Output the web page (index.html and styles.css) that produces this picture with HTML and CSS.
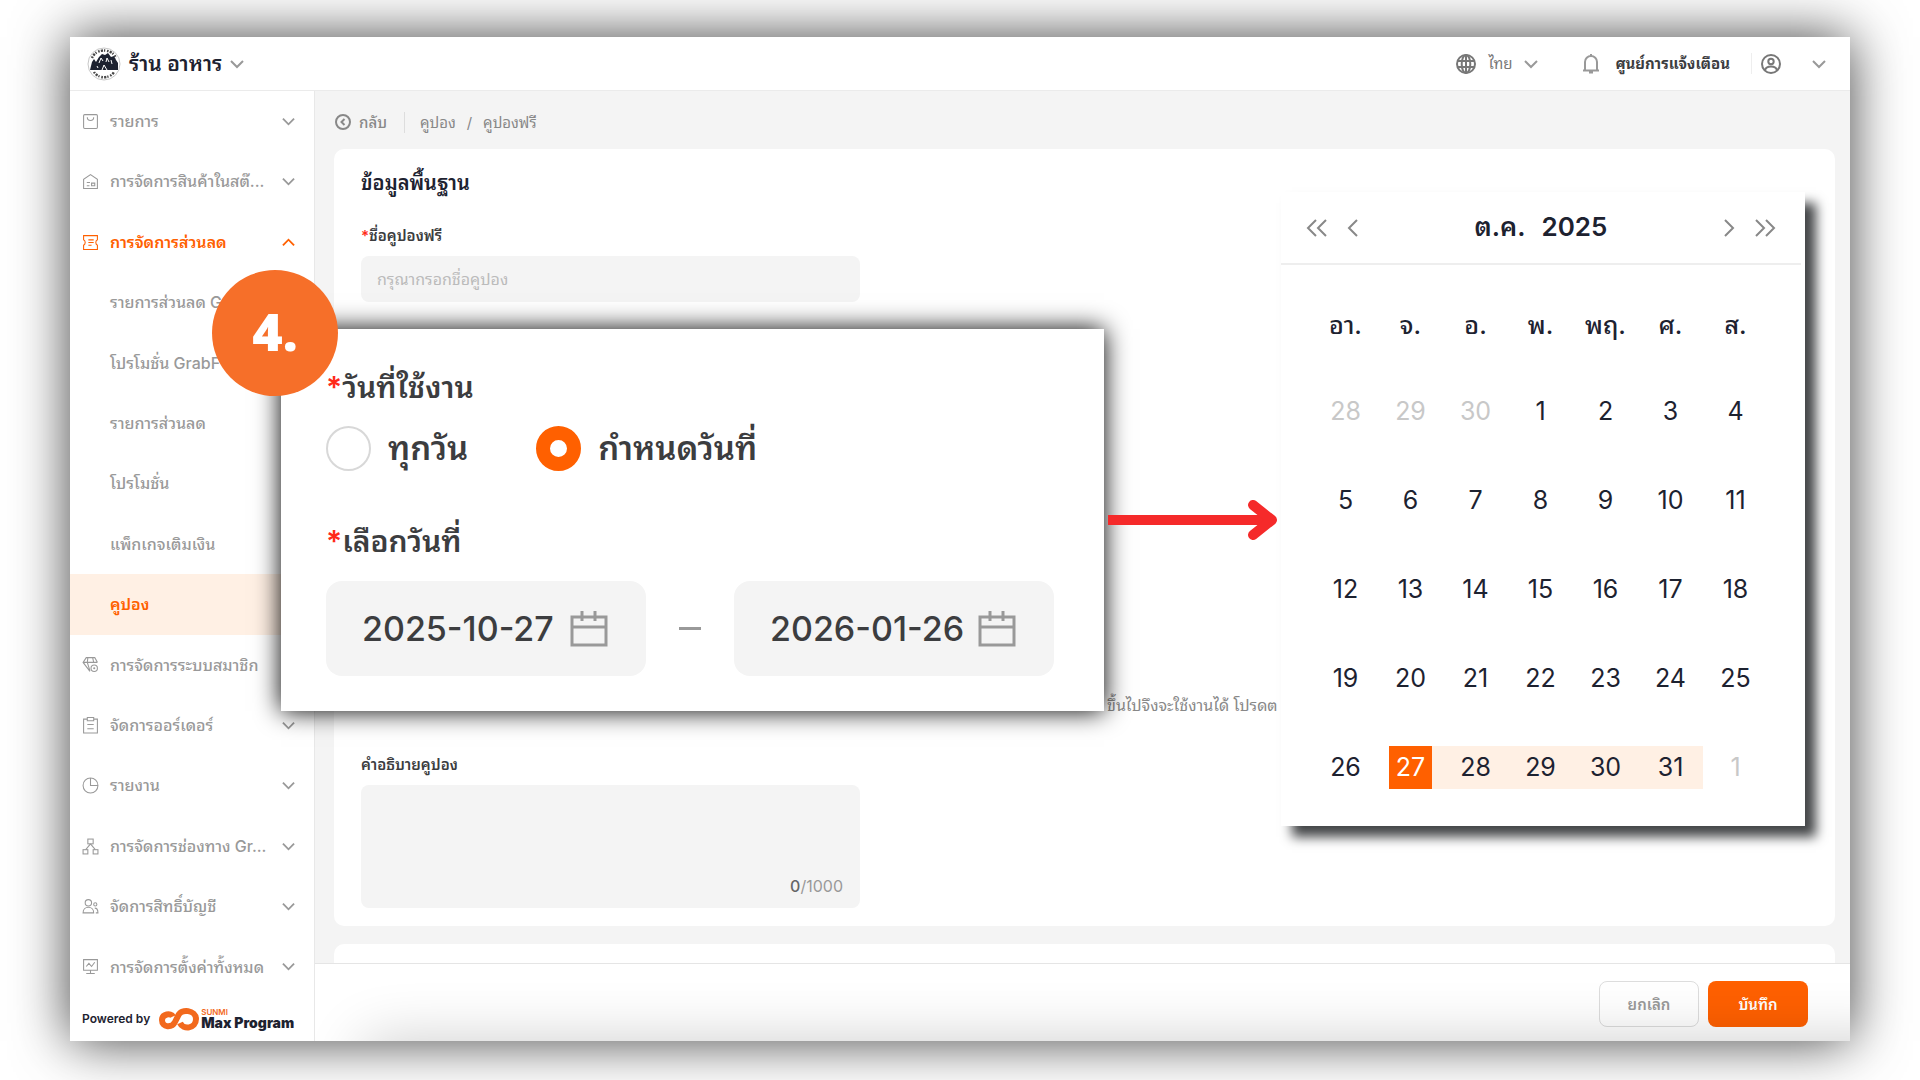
FILE: index.html
```html
<!DOCTYPE html>
<html lang="th">
<head>
    <meta charset="UTF-8">
    <meta name="viewport" content="width=device-width, initial-scale=1.0">
    <title>คูปองฟรี</title>
    <link rel="stylesheet" href="styles.css">
</head>
<body>
    <!-- Shared icons -->
    <svg class="sprite" aria-hidden="true">
        <symbol id="down" viewBox="0 0 14 14"><path d="M1 4l6 6 6-6"/></symbol>
        <symbol id="up" viewBox="0 0 14 14"><path d="M1 10l6-6 6 6"/></symbol>
        <symbol id="date" viewBox="0 0 38 36"><path d="M2 6h34v28H2zM2 16h34M12 0v10M25 0v10"/></symbol>
    </svg>

    <div class="app">
        <header class="header">
            <button class="store" type="button">
                <svg class="store-logo" viewBox="0 0 34 34">
                    <circle cx="17" cy="17" r="16" fill="#fff" stroke="#c8c8c8"/>
                    <path d="M5 11c4-10 20-10 24 0M7 25c4 7 16 7 20 0" fill="none" stroke="#444" stroke-width="2.4" stroke-dasharray="1.6 1.2 2.2 1 1.2 1.8"/>
                    <path d="M3 23l2-8 2-3 2 3 3-5 3-3 3 1 3-2 3 4 3-1 2 4 2 3v7z" fill="#1d2230" stroke="none"/>
                    <path d="M12 16l2-5 2 3M19 15l1-4 2 4M24 13l1 4M15 23l2-5 3 5M10 19l1 2" fill="none" stroke="#fff"/>
                </svg>
                <span>ร้าน อาหาร</span>
                <svg class="chevron"><use href="#down"/></svg>
            </button>
            <div class="header-right">
                <button class="lang" type="button">
                    <svg class="icon-20" viewBox="0 0 20 20"><circle cx="10" cy="10" r="9"/><ellipse cx="10" cy="10" rx="4.3" ry="9"/><path d="M10 1v18M1.5 7h17M1.5 13h17"/></svg>
                    <span>ไทย</span>
                    <svg class="chevron"><use href="#down"/></svg>
                </button>
                <button class="notice" type="button">
                    <svg class="icon-20 light" viewBox="0 0 20 20"><path d="M10 0v2M4 16V8a6 6 0 0 1 12 0v8M2 16.500h16M8 18.500h4"/></svg>
                    <span>ศูนย์การแจ้งเตือน</span>
                </button>
                <button class="account" type="button" aria-label="บัญชี">
                    <svg class="icon-20" viewBox="0 0 20 20"><circle cx="10" cy="10" r="9"/><circle cx="10" cy="7.500" r="2.700"/><path d="M4 16.200c1-5 11-5 12 0"/></svg>
                    <svg class="chevron"><use href="#down"/></svg>
                </button>
            </div>
        </header>

        <div class="body">
            <aside class="sidebar">
                <nav class="menu">
                    <a href="#"><svg class="menu-icon" viewBox="0 0 16 16"><rect x="1.500" y="1.500" width="13" height="13" rx="1"/><path d="M5 4c0 4 6 4 6 0"/></svg><span>รายการ</span><svg class="chevron"><use href="#down"/></svg></a>
                    <a href="#"><svg class="menu-icon" viewBox="0 0 16 16"><path d="M1.500 14.500V6L8 1.500 14.500 6v8.500zM4.500 9h3M4.500 12h2.500M9 12V9.500h3V12z"/></svg><span>การจัดการสินค้าในสต๊...</span><svg class="chevron"><use href="#down"/></svg></a>
                    <a href="#" class="open"><svg class="menu-icon" viewBox="0 0 16 16"><path d="M1.500 1.500h13v4c-2 1-2 4 0 5v4h-13v-4c2-1 2-4 0-5zM6 5.500h5M6 8h5M6 10.500h3"/></svg><span>การจัดการส่วนลด</span><svg class="chevron"><use href="#up"/></svg></a>
                    <a href="#" class="sub">รายการส่วนลด G</a>
                    <a href="#" class="sub">โปรโมชั่น GrabF</a>
                    <a href="#" class="sub">รายการส่วนลด</a>
                    <a href="#" class="sub">โปรโมชั่น</a>
                    <a href="#" class="sub">แพ็กเกจเติมเงิน</a>
                    <a href="#" class="sub active">คูปอง</a>
                    <a href="#"><svg class="menu-icon" viewBox="0 0 16 16"><path d="M14.500 6L12 1.500H4L1 6l6.500 8.500M1 6h13.500M5.500 1.500L5 6l2.500 8M10 1.500L11 6"/><circle cx="11.500" cy="11.500" r="3"/><circle cx="11.500" cy="11.500" r="0.500"/></svg><span>การจัดการระบบสมาชิก</span><svg class="chevron"><use href="#down"/></svg></a>
                    <a href="#"><svg class="menu-icon" viewBox="0 0 16 16"><path d="M5 2H1.500v13h13V2H11M5 .500h6v3H5zM5 7h6M5 11h6"/></svg><span>จัดการออร์เดอร์</span><svg class="chevron"><use href="#down"/></svg></a>
                    <a href="#"><svg class="menu-icon" viewBox="0 0 16 16"><circle cx="8" cy="8" r="7"/><path d="M8 1v7h7"/></svg><span>รายงาน</span><svg class="chevron"><use href="#down"/></svg></a>
                    <a href="#"><svg class="menu-icon" viewBox="0 0 16 16"><rect x="5.500" y="1" width="5" height="4.500"/><rect x="1" y="11" width="4.500" height="4"/><rect x="10.500" y="11" width="4.500" height="4"/><path d="M8 5.500L3.500 11M8 5.500l4.500 5.500"/></svg><span>การจัดการช่องทาง Gr...</span><svg class="chevron"><use href="#down"/></svg></a>
                    <a href="#"><svg class="menu-icon" viewBox="0 0 16 16"><circle cx="6" cy="4.500" r="3"/><path d="M1 14c0-7 10-7 10 0z"/><circle cx="12.500" cy="6" r="1.500"/><path d="M12 9.500c2 0 3 2 3 4.500h-2"/></svg><span>จัดการสิทธิ์บัญชี</span><svg class="chevron"><use href="#down"/></svg></a>
                    <a href="#"><svg class="menu-icon" viewBox="0 0 16 16"><path d="M1.500 1.500h13v10h-13zM4 8l2.500-3L9 8l3-4M4 14.500h8M8 11.500v3"/></svg><span>การจัดการตั้งค่าทั้งหมด</span><svg class="chevron"><use href="#down"/></svg></a>
                </nav>
                <div class="powered">
                    <span>Powered by</span>
                    <svg class="loop" viewBox="0 0 40 24"><path d="M14 9.500c-2-4-11-2.500-11 3.500 0 8 10 8 13 2l3-6c3-8 18-6 18 3 0 10-13 11-16 4"/></svg>
                    <div class="brand"><small>SUNMI</small><b>Max Program</b></div>
                </div>
            </aside>

            <main class="main">
                <div class="breadcrumb">
                    <a href="#" class="back"><svg class="back-icon" viewBox="0 0 16 16"><circle cx="8" cy="8" r="7"/><path d="M9.500 5l-3 3 3 3"/></svg>กลับ</a>
                    <a href="#">คูปอง</a>
                    <span>/</span>
                    <span>คูปองฟรี</span>
                </div>

                <section class="card">
                    <h2>ข้อมูลพื้นฐาน</h2>
                    <label for="couponName"><i>*</i>ชื่อคูปองฟรี</label>
                    <input type="text" id="couponName" placeholder="กรุณากรอกชื่อคูปอง">
                    <p class="hint">ขึ้นไปจึงจะใช้งานได้ โปรดต</p>
                    <label for="couponDesc">คำอธิบายคูปอง</label>
                    <div class="desc">
                        <textarea id="couponDesc"></textarea>
                        <span class="count"><b>0</b>/1000</span>
                    </div>
                </section>
                <section class="card next-card"></section>

                <footer class="actions">
                    <button class="cancel" type="button">ยกเลิก</button>
                    <button class="save" type="button">บันทึก</button>
                </footer>
            </main>
        </div>

        <!-- Enlarged date settings -->
        <section class="popup">
            <div class="step">4.</div>
            <fieldset>
                <legend><i>*</i>วันที่ใช้งาน</legend>
                <div class="radios">
                    <label><input type="radio" name="days">ทุกวัน</label>
                    <label><input type="radio" name="days" checked>กำหนดวันที่</label>
                </div>
            </fieldset>
            <fieldset>
                <legend><i>*</i>เลือกวันที่</legend>
                <div class="dates">
                    <label class="date"><input type="text" value="2025-10-27" aria-label="วันที่เริ่ม"><svg><use href="#date"/></svg></label>
                    <span class="dash"></span>
                    <label class="date"><input type="text" value="2026-01-26" aria-label="วันที่สิ้นสุด"><svg><use href="#date"/></svg></label>
                </div>
            </fieldset>
        </section>

        <svg class="arrow" viewBox="0 0 170 40"><path class="shaft" d="M0 20h160"/><path class="head" d="M145 5l19 15-19 15"/></svg>

        <section class="calendar">
            <div class="calendar-head">
                <button type="button" aria-label="ปีก่อน"><svg viewBox="0 0 22 20"><path d="M10 2L2 10l8 8M20 2l-8 8 8 8"/></svg></button>
                <button type="button" aria-label="เดือนก่อน"><svg viewBox="0 0 22 20"><path d="M16 2l-8 8 8 8"/></svg></button>
                <h3><span>ต.ค.</span><span>2025</span></h3>
                <button type="button" aria-label="เดือนถัดไป"><svg viewBox="0 0 22 20"><path d="M6 2l8 8-8 8"/></svg></button>
                <button type="button" aria-label="ปีถัดไป"><svg viewBox="0 0 22 20"><path d="M2 2l8 8-8 8M12 2l8 8-8 8"/></svg></button>
            </div>
            <table>
                <thead>
                    <tr><th>อา.</th><th>จ.</th><th>อ.</th><th>พ.</th><th>พฤ.</th><th>ศ.</th><th>ส.</th></tr>
                </thead>
                <tbody>
                    <tr><td class="out"><button>28</button></td><td class="out"><button>29</button></td><td class="out"><button>30</button></td><td><button>1</button></td><td><button>2</button></td><td><button>3</button></td><td><button>4</button></td></tr>
                    <tr><td><button>5</button></td><td><button>6</button></td><td><button>7</button></td><td><button>8</button></td><td><button>9</button></td><td><button>10</button></td><td><button>11</button></td></tr>
                    <tr><td><button>12</button></td><td><button>13</button></td><td><button>14</button></td><td><button>15</button></td><td><button>16</button></td><td><button>17</button></td><td><button>18</button></td></tr>
                    <tr><td><button>19</button></td><td><button>20</button></td><td><button>21</button></td><td><button>22</button></td><td><button>23</button></td><td><button>24</button></td><td><button>25</button></td></tr>
                    <tr><td><button>26</button></td><td class="start"><button>27</button></td><td class="range"><button>28</button></td><td class="range"><button>29</button></td><td class="range"><button>30</button></td><td class="range"><button>31</button></td><td class="out"><button>1</button></td></tr>
                </tbody>
            </table>
        </section>
    </div>
</body>
</html>
```
FILE: styles.css
```css
* {
    box-sizing: border-box;
}
body {
    margin: 0;
    min-height: 100vh;
    padding: 37px 70px 39px;
    display: flex;
    background-color: #fff;
    color: #3c3d3f;
    font-family: Inter, "Noto Sans Thai Looped", "Noto Looped Thai", Loma, Garuda, Waree, "Noto Sans Thai", sans-serif;
    font-size: 15px;
    line-height: 1.4;
    overflow: hidden;
}
button, input, textarea {
    font: inherit;
    color: inherit;
    border: none;
    padding: 0;
    margin: 0;
    background: none;
}
button {
    cursor: pointer;
}
a {
    color: inherit;
    text-decoration: none;
}
i {
    color: #ff2a1a;
    font-style: normal;
}
svg {
    fill: none;
    stroke: currentColor;
    flex-shrink: 0;
}
.sprite {
    position: absolute;
    width: 0;
    height: 0;
}
.chevron {
    width: 14px;
    height: 14px;
    stroke-width: 2;
    color: #999;
}
.app {
    position: relative;
    flex: 1;
    display: flex;
    flex-direction: column;
    background-color: #fff;
    box-shadow: 0 0 52px rgba(0, 0, 0, 0.75);
}

/* Header */
.header {
    height: 54px;
    display: flex;
    align-items: center;
    justify-content: space-between;
    padding: 0 24px 0 17px;
    border-bottom: 1px solid #ebebeb;
}
.header button, .header-right {
    display: flex;
    align-items: center;
}
.store {
    gap: 8px;
    font-size: 21px;
    font-weight: 600;
    color: #1d2230;
}
.store-logo {
    width: 34px;
    height: 34px;
}
.icon-20 {
    width: 20px;
    height: 20px;
    stroke-width: 2;
    color: #777;
}
.icon-20.light {
    color: #999;
}
.lang {
    gap: 12px;
    margin-right: 43px;
    color: #777;
}
.notice {
    gap: 14px;
    padding-right: 21px;
    border-right: 1px solid #eee;
    font-weight: 700;
}
.account {
    gap: 31px;
    padding-left: 9px;
}

/* Sidebar */
.body {
    flex: 1;
    display: flex;
}
.sidebar {
    width: 245px;
    display: flex;
    flex-direction: column;
    border-right: 1px solid #e8e8e8;
}
.menu {
    flex: 1;
    display: flex;
    flex-direction: column;
}
.menu a {
    flex: 1;
    display: flex;
    align-items: center;
    gap: 11px;
    padding: 0 19px 0 12px;
    color: #999;
    font-size: 16px;
    font-weight: 500;
    white-space: nowrap;
}
.menu span {
    flex: 1;
}
.menu .chevron {
    width: 13px;
    height: 13px;
}
.menu .sub {
    padding-left: 40px;
}
.menu .open, .menu .open .chevron, .menu .active {
    color: #ff6000;
    font-weight: 600;
}
.menu .active {
    background-color: #fff0e4;
}
.menu-icon {
    width: 17px;
    height: 17px;
}
.powered {
    height: 44px;
    display: flex;
    align-items: center;
    padding-left: 12px;
    font-size: 12px;
    font-weight: 600;
    color: #1d2230;
}
.loop {
    width: 40px;
    height: 24px;
    margin: 0 2px 0 9px;
    stroke: #f2691d;
    stroke-width: 6;
}
.brand {
    display: flex;
    flex-direction: column;
    font-size: 14px;
    line-height: 14px;
}
.brand small {
    font-size: 8px;
    line-height: 8px;
    color: #f2691d;
}
.brand b {
    font-weight: 900;
}

/* Main */
.main {
    flex: 1;
    display: flex;
    flex-direction: column;
    background-color: #f4f4f4;
}
.breadcrumb {
    height: 58px;
    display: flex;
    align-items: center;
    gap: 11px;
    padding: 4px 20px 0;
    color: #888;
}
.back {
    display: flex;
    align-items: center;
    gap: 8px;
    padding-right: 17px;
    margin-right: 4px;
    border-right: 1px solid #ddd;
    font-weight: 500;
}
.back-icon {
    width: 16px;
    height: 16px;
    stroke-width: 2;
}
.card {
    margin: 0 15px 18px 19px;
    padding: 19px 27px 18px;
    background-color: #fff;
    border-radius: 10px;
}
.card h2 {
    margin: 0 0 26px;
    font-size: 20px;
    line-height: 30px;
    font-weight: 600;
    color: #1d2230;
}
.card label {
    display: block;
    margin-bottom: 8px;
    line-height: 24px;
    font-weight: 600;
}
.card input, .desc {
    display: block;
    width: 499px;
    background-color: #f4f4f4;
    border-radius: 8px;
}
.card input {
    height: 46px;
    padding: 0 16px;
    font-size: 16px;
}
.card input::placeholder {
    color: #bbb;
}
.hint {
    margin: 391px 0 36px 746px;
    line-height: 24px;
    font-size: 16px;
    white-space: nowrap;
    color: #888;
}
.desc {
    display: flex;
    flex-direction: column;
    height: 123px;
    padding: 12px 17px;
}
.desc textarea {
    flex: 1;
    resize: none;
    outline: none;
}
.count {
    align-self: flex-end;
    line-height: 20px;
    font-size: 16px;
    color: #999;
}
.count b {
    font-weight: 500;
    color: #666;
}
.next-card {
    flex: 1;
    margin-bottom: 0;
    padding: 0;
    border-radius: 10px 10px 0 0;
}
.actions {
    position: relative;
    height: 78px;
    display: flex;
    align-items: center;
    justify-content: flex-end;
    gap: 9px;
    padding: 3px 42px 0;
    border-top: 1px solid #e5e5e5;
    background-color: #fff;
    overflow: hidden;
}
/* Soft shade rising from the bottom edge */
.actions::after {
    content: "";
    position: absolute;
    top: 100%;
    left: 50px;
    right: -60px;
    height: 80px;
    box-shadow: 0 0 60px rgba(0, 0, 0, 0.2);
    pointer-events: none;
}
.actions button {
    width: 100px;
    height: 46px;
    border-radius: 8px;
    font-weight: 600;
}
.cancel {
    border: 1px solid #ddd;
    color: #999;
}
.actions .save {
    background-color: #ff6000;
    color: #fff;
}

/* Date settings */
.popup {
    position: absolute;
    top: 292px;
    left: 211px;
    width: 823px;
    padding: 38px 45px 35px;
    background-color: #fff;
    box-shadow: 0 0 24px #000;
}
.step {
    position: absolute;
    top: -59px;
    left: -69px;
    width: 126px;
    height: 126px;
    border-radius: 50%;
    background-color: #f66f29;
    color: #fff;
    font-family: "Open Sans", sans-serif;
    font-size: 52px;
    font-weight: 800;
    line-height: 122px;
    text-align: center;
}
fieldset {
    border: none;
    margin: 0;
    padding: 0;
}
legend {
    padding: 0;
    font-size: 30px;
    line-height: 40px;
    font-weight: 600;
}
.radios {
    display: flex;
    gap: 68px;
    padding: 18px 0 50px;
}
.radios label {
    display: flex;
    align-items: center;
    gap: 17px;
    height: 46px;
    font-size: 33px;
    font-weight: 600;
}
.radios input {
    appearance: none;
    width: 45px;
    height: 45px;
    border: 2px solid #d8d8d8;
    border-radius: 50%;
}
.radios input:checked {
    border: 14px solid #ff6000;
}
.dates {
    display: flex;
    align-items: center;
    justify-content: space-between;
    padding-top: 20px;
    margin-right: 5px;
}
.date {
    width: 320px;
    height: 95px;
    display: flex;
    align-items: center;
    gap: 14px;
    padding: 0 38px 0 36px;
    background-color: #f4f4f4;
    border-radius: 16px;
}
.date input {
    flex: 1;
    min-width: 0;
    font-size: 34px;
    font-weight: 500;
}
.date svg {
    width: 38px;
    height: 36px;
    stroke-width: 3;
    color: #999;
}
.dash {
    width: 22px;
    height: 3px;
    background-color: #999;
}

/* Arrow to the calendar */
.arrow {
    position: absolute;
    top: 463px;
    left: 1038px;
    width: 170px;
    height: 40px;
    stroke: #f52a2a;
    stroke-width: 10;
}
.head {
    stroke-linecap: round;
    stroke-linejoin: round;
}

/* Calendar */
.calendar {
    position: absolute;
    top: 155px;
    right: 45px;
    width: 524px;
    padding-bottom: 14px;
    background-color: #fff;
    box-shadow: 11px 11px 11px #444648;
    color: #1d2230;
}
.calendar-head {
    display: flex;
    align-items: center;
    gap: 13px;
    height: 73px;
    margin-right: 4px;
    padding: 0 25px;
    border-bottom: 2px solid #eee;
}
.calendar-head svg {
    display: block;
    width: 22px;
    height: 20px;
    stroke-width: 2;
    color: #888;
}
.calendar-head h3 {
    flex: 1;
    display: flex;
    align-items: baseline;
    justify-content: center;
    gap: 16px;
    margin: 0;
    font-size: 26px;
    font-weight: 600;
}
.calendar table {
    width: 455px;
    margin: 18px 0 0 32px;
    border-collapse: collapse;
    table-layout: fixed;
    font-size: 25px;
}
.calendar th {
    height: 84px;
    padding: 0;
    font-weight: 500;
}
.calendar td {
    height: 89px;
    padding: 0;
}
.calendar td button {
    display: block;
    width: 100%;
    height: 43px;
    margin: 0 auto;
}
.calendar .out {
    color: #c8c8c8;
}
.calendar .range button {
    background-color: #fff0e4;
}
.calendar .start button {
    width: 43px;
    background-color: #ff6000;
    box-shadow: 11px 0 0 #fff0e4;
    color: #fff;
}
```
